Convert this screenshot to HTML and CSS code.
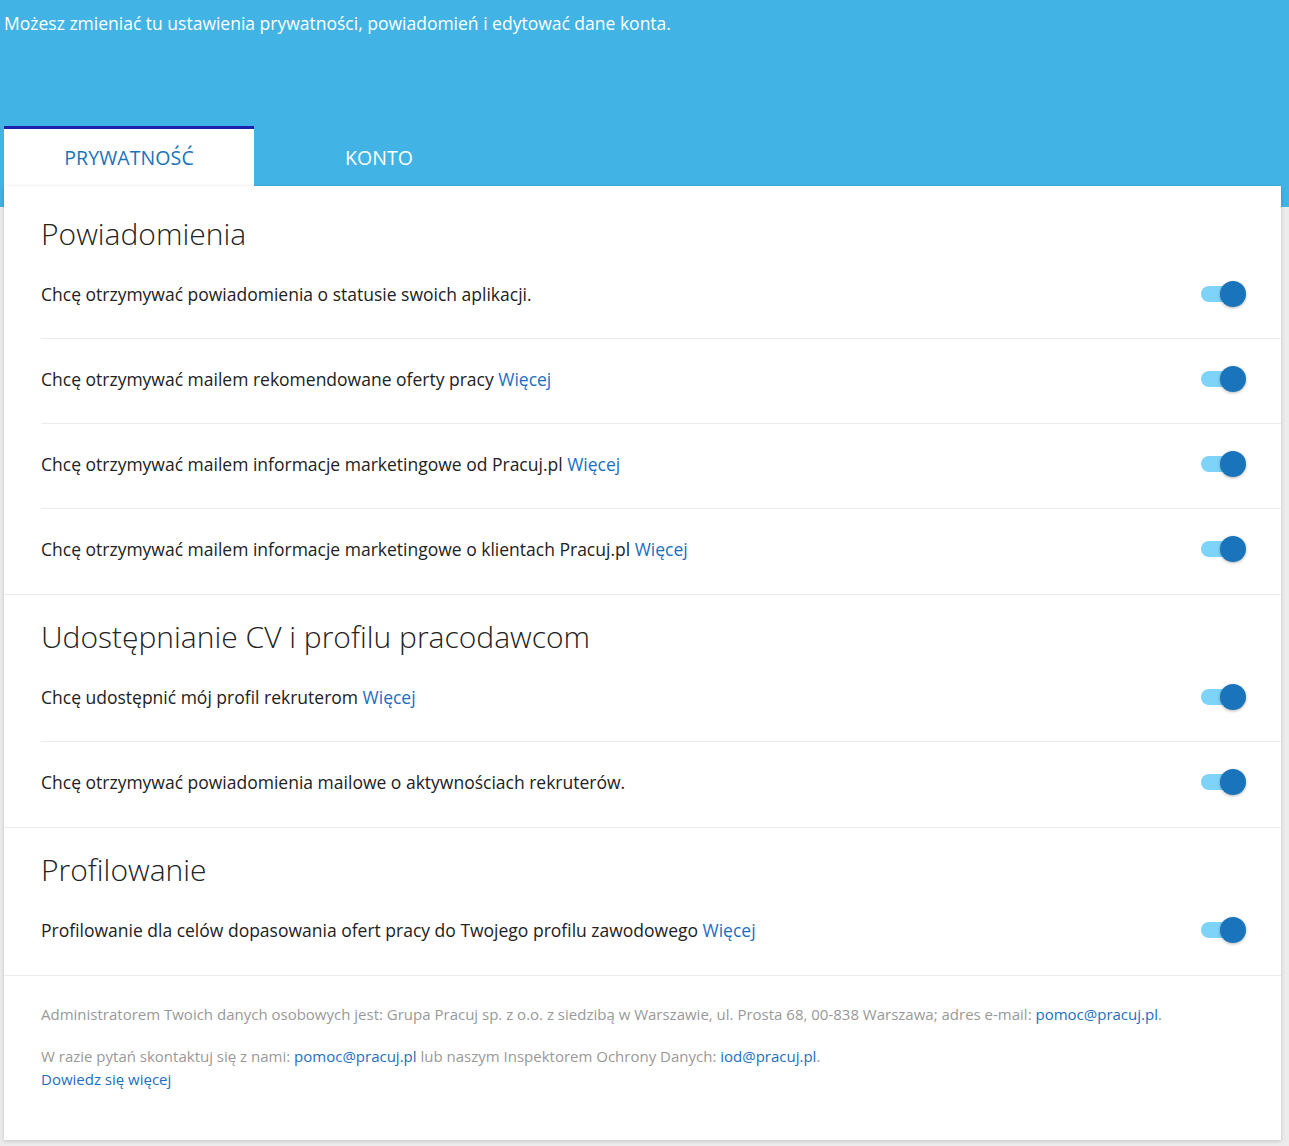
FILE: index.html
```html
<!DOCTYPE html>
<html lang="pl">
<head>
<meta charset="utf-8">
<title>Ustawienia</title>
<link rel="stylesheet" href="styles.css">
</head>
<body>
<header class="top">
  <p class="intro">Możesz zmieniać tu ustawienia prywatności, powiadomień i edytować dane konta.</p>
  <nav class="tabs">
    <a class="tab tab-active">PRYWATNOŚĆ</a>
    <a class="tab">KONTO</a>
  </nav>
</header>
<main class="card">
  <section class="section section-first">
    <h2 class="section-title">Powiadomienia</h2>
    <div class="row">
      <span class="row-text">Chcę otrzymywać powiadomienia o statusie swoich aplikacji.</span>
      <span class="toggle"><span class="track"></span><span class="knob"></span></span>
    </div>
    <div class="row">
      <span class="row-text">Chcę otrzymywać mailem rekomendowane oferty pracy <a class="link">Więcej</a></span>
      <span class="toggle"><span class="track"></span><span class="knob"></span></span>
    </div>
    <div class="row">
      <span class="row-text">Chcę otrzymywać mailem informacje marketingowe od Pracuj.pl <a class="link">Więcej</a></span>
      <span class="toggle"><span class="track"></span><span class="knob"></span></span>
    </div>
    <div class="row">
      <span class="row-text">Chcę otrzymywać mailem informacje marketingowe o klientach Pracuj.pl <a class="link">Więcej</a></span>
      <span class="toggle"><span class="track"></span><span class="knob"></span></span>
    </div>
  </section>
  <section class="section">
    <h2 class="section-title">Udostępnianie CV i profilu pracodawcom</h2>
    <div class="row">
      <span class="row-text">Chcę udostępnić mój profil rekruterom <a class="link">Więcej</a></span>
      <span class="toggle"><span class="track"></span><span class="knob"></span></span>
    </div>
    <div class="row">
      <span class="row-text">Chcę otrzymywać powiadomienia mailowe o aktywnościach rekruterów.</span>
      <span class="toggle"><span class="track"></span><span class="knob"></span></span>
    </div>
  </section>
  <section class="section">
    <h2 class="section-title">Profilowanie</h2>
    <div class="row">
      <span class="row-text">Profilowanie dla celów dopasowania ofert pracy do Twojego profilu zawodowego <a class="link">Więcej</a></span>
      <span class="toggle"><span class="track"></span><span class="knob"></span></span>
    </div>
  </section>
  <footer class="legal">
    <p class="legal-p">Administratorem Twoich danych osobowych jest: Grupa Pracuj sp. z o.o. z siedzibą w Warszawie, ul. Prosta 68, 00-838 Warszawa; adres e-mail: <a class="link">pomoc@pracuj.pl</a>.</p>
    <p class="legal-p">W razie pytań skontaktuj się z nami: <a class="link">pomoc@pracuj.pl</a> lub naszym Inspektorem Ochrony Danych: <a class="link">iod@pracuj.pl</a>.<br><a class="link">Dowiedz się więcej</a></p>
  </footer>
</main>
</body>
</html>
```

FILE: styles.css
```css
html, body {
  margin: 0;
  padding: 0;
}
body {
  background: #ececec;
  font-family: "Open Sans", "Noto Sans", sans-serif;
  color: #222;
  width: 1289px;
  min-height: 1146px;
}
.top {
  background: #41b4e5;
  padding: 11px 0 21px 0;
}
.intro {
  margin: 0 0 0 4px;
  color: #fff;
  font-size: 17.5px;
  line-height: 24px;
}
.tabs {
  display: flex;
  margin: 91px 0 0 4px;
}
.tab {
  width: 250px;
  height: 57px;
  border-top: 3px solid transparent;
  display: flex;
  align-items: center;
  justify-content: center;
  font-size: 19.5px;
  color: #fff;
  letter-spacing: 0.1px;
}
.tab-active {
  background: #fff;
  color: #1a73ba;
  border-top-color: #1a22ae;
}
.card {
  position: relative;
  background: #fff;
  margin: -21px 8px 0 4px;
  box-shadow: 0 1px 4px rgba(0,0,0,0.18);
}
.section {
  padding-top: 22px;
  border-bottom: 1px solid #ebebeb;
}
.section-first {
  padding-top: 28px;
}
.section-title {
  margin: 0 0 0 37px;
  font-size: 30px;
  line-height: 40px;
  font-weight: 300;
  color: #222;
}
.row {
  display: flex;
  align-items: center;
  justify-content: space-between;
  margin-left: 37px;
  padding: 27px 35px 31px 0;
  border-bottom: 1px solid #ebebeb;
  font-size: 17.5px;
  line-height: 26px;
}
.row:last-child {
  border-bottom: none;
  padding-bottom: 32px;
}
.link {
  color: #1b6fc2;
  text-decoration: none;
}
.toggle {
  position: relative;
  width: 45px;
  height: 26px;
  flex: none;
}
.track {
  position: absolute;
  left: 0;
  top: 5px;
  width: 39px;
  height: 16px;
  border-radius: 8px;
  background: #7dd3f8;
}
.knob {
  position: absolute;
  right: 0;
  top: 0;
  width: 26px;
  height: 26px;
  border-radius: 50%;
  background: #1a74bc;
  box-shadow: 0 1px 3px rgba(0,0,0,0.3);
}
.legal {
  padding: 27px 37px 49px 37px;
  font-size: 15px;
  line-height: 23px;
  color: #999;
}
.legal-p {
  margin: 0 0 19px 0;
}
.legal-p:last-child {
  margin-bottom: 0;
}
```
